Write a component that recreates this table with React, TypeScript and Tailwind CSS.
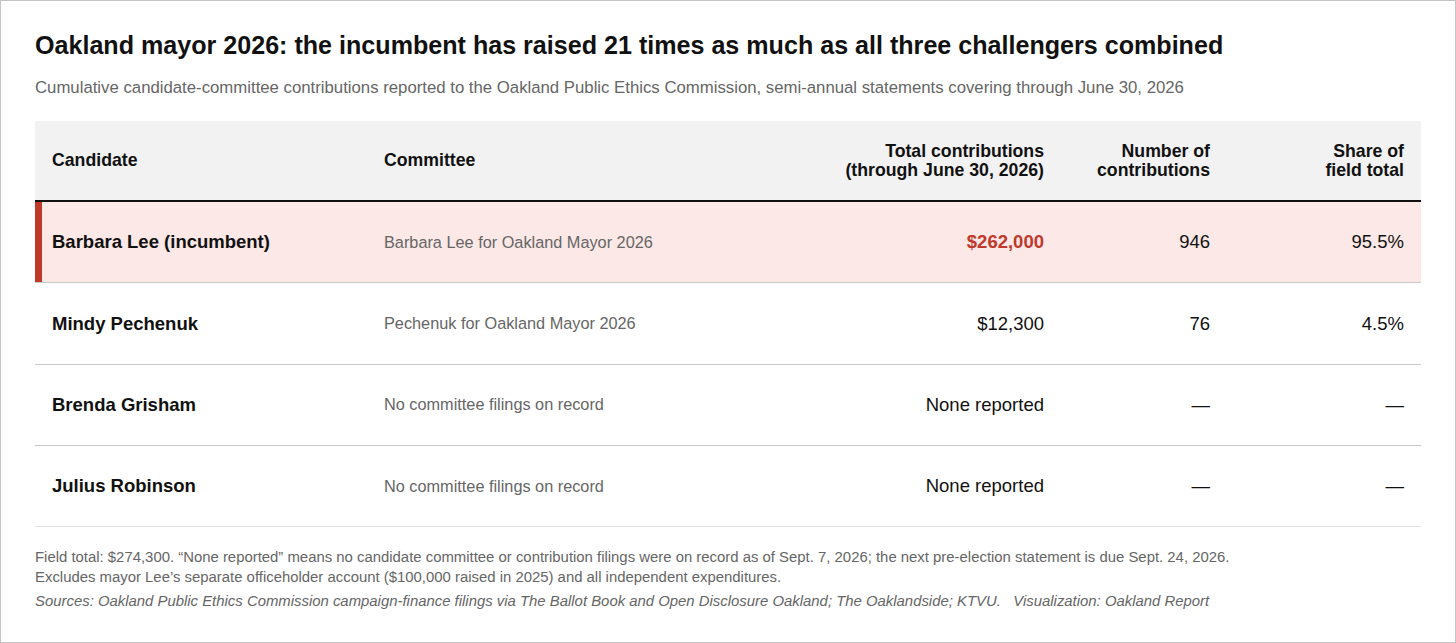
const rows = [
  {
    name: "Barbara Lee (incumbent)",
    committee: "Barbara Lee for Oakland Mayor 2026",
    total: "$262,000",
    count: "946",
    share: "95.5%",
    lead: true,
  },
  {
    name: "Mindy Pechenuk",
    committee: "Pechenuk for Oakland Mayor 2026",
    total: "$12,300",
    count: "76",
    share: "4.5%",
  },
  {
    name: "Brenda Grisham",
    committee: "No committee filings on record",
    total: "None reported",
    count: "—",
    share: "—",
  },
  {
    name: "Julius Robinson",
    committee: "No committee filings on record",
    total: "None reported",
    count: "—",
    share: "—",
  },
];

const cols = "grid grid-cols-[333px_380px_312px_166px_195px]";

export default function App() {
  return (
    <div className="h-[643px] w-[1456px] border border-[#c4c4c4] bg-white px-[34px] pt-[29px] font-['Liberation_Sans',Arial,sans-serif] text-[#111]">
      <h1 className="text-[25.1px] font-bold leading-[30px]">
        Oakland mayor 2026: the incumbent has raised 21 times as much as all three challengers combined
      </h1>
      <p className="mt-[17px] text-[16.75px] leading-[22px] text-[#666]">
        Cumulative candidate-committee contributions reported to the Oakland Public Ethics Commission, semi-annual
        statements covering through June 30, 2026
      </p>

      <div className="mt-[22px] w-[1386px]">
        <div className={`${cols} h-[81px] items-center border-b-2 border-[#111] bg-[#f2f2f2] text-[17.7px] font-bold leading-[19px]`}>
          <div className="px-[17px]">Candidate</div>
          <div className="px-4">Committee</div>
          <div className="px-4 text-right">
            Total contributions
            <br />
            (through June 30, 2026)
          </div>
          <div className="px-4 text-right">
            Number of
            <br />
            contributions
          </div>
          <div className="px-[17px] text-right">
            Share of
            <br />
            field total
          </div>
        </div>

        {rows.map((r, i) => (
          <div
            key={r.name}
            className={`${cols} h-[81.25px] items-center border-b ${
              i === rows.length - 1 ? "border-[#e2e2e2]" : "border-[#c8c8c8]"
            } ${r.lead ? "bg-[#fce8e6] shadow-[inset_7px_0_0_#c0392b]" : ""}`}
          >
            <div className="px-[17px] text-[18.5px] font-bold">{r.name}</div>
            <div className="px-4 text-[16.3px] text-[#666]">{r.committee}</div>
            <div className={`px-4 text-right text-[18.5px] ${r.lead ? "font-bold text-[#c0392b]" : ""}`}>{r.total}</div>
            <div className="px-4 text-right text-[18.5px]">{r.count}</div>
            <div className="px-[17px] text-right text-[18.5px]">{r.share}</div>
          </div>
        ))}
      </div>

      <div className="mt-[20px] text-[14.9px] leading-[20px] text-[#666]">
        <p>
          Field total: $274,300. “None reported” means no candidate committee or contribution filings were on record as
          of Sept. 7, 2026; the next pre-election statement is due Sept. 24, 2026.
          <br />
          Excludes mayor Lee’s separate officeholder account ($100,000 raised in 2025) and all independent expenditures.
        </p>
        <p className="mt-[4px] italic">
          Sources: Oakland Public Ethics Commission campaign-finance filings via The Ballot Book and Open Disclosure
          Oakland; The Oaklandside; KTVU.&nbsp;&nbsp; Visualization: Oakland Report
        </p>
      </div>
    </div>
  );
}
